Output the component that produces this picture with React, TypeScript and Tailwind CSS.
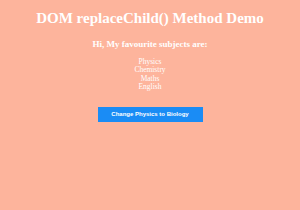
import React, { useState } from "react";

const App: React.FC = () => {
  const [subjects, setSubjects] = useState(["Physics", "Chemistry", "Maths", "English"]);

  const handleReplace = () => {
    setSubjects((prev) => prev.map((s) => (s === "Physics" ? "Biology" : s)));
  };

  return (
    <div
      className="w-[300px] h-[210px] bg-[#fdb49c] text-white text-center"
      style={{ fontFamily: '"Liberation Serif", "Times New Roman", serif' }}
    >
      <h1 className="pt-[9px] text-[15px] leading-[18px] font-bold">
        DOM replaceChild() Method Demo
      </h1>
      <h3 className="mt-[12px] text-[9px] leading-[11px] font-bold">
        Hi, My favourite subjects are:
      </h3>
      <ul className="mt-[8px] text-[7.5px] leading-[8.4px]">
        {subjects.map((s) => (
          <li key={s}>{s}</li>
        ))}
      </ul>
      <div className="mt-[15px] flex justify-center">
        <button
          onClick={handleReplace}
          className="w-[105px] h-[15px] bg-[#1a8cf5] text-white text-[6px] font-bold"
          style={{ fontFamily: '"Liberation Sans", Arial, sans-serif' }}
        >
          Change Physics to Biology
        </button>
      </div>
    </div>
  );
};

export default App;
